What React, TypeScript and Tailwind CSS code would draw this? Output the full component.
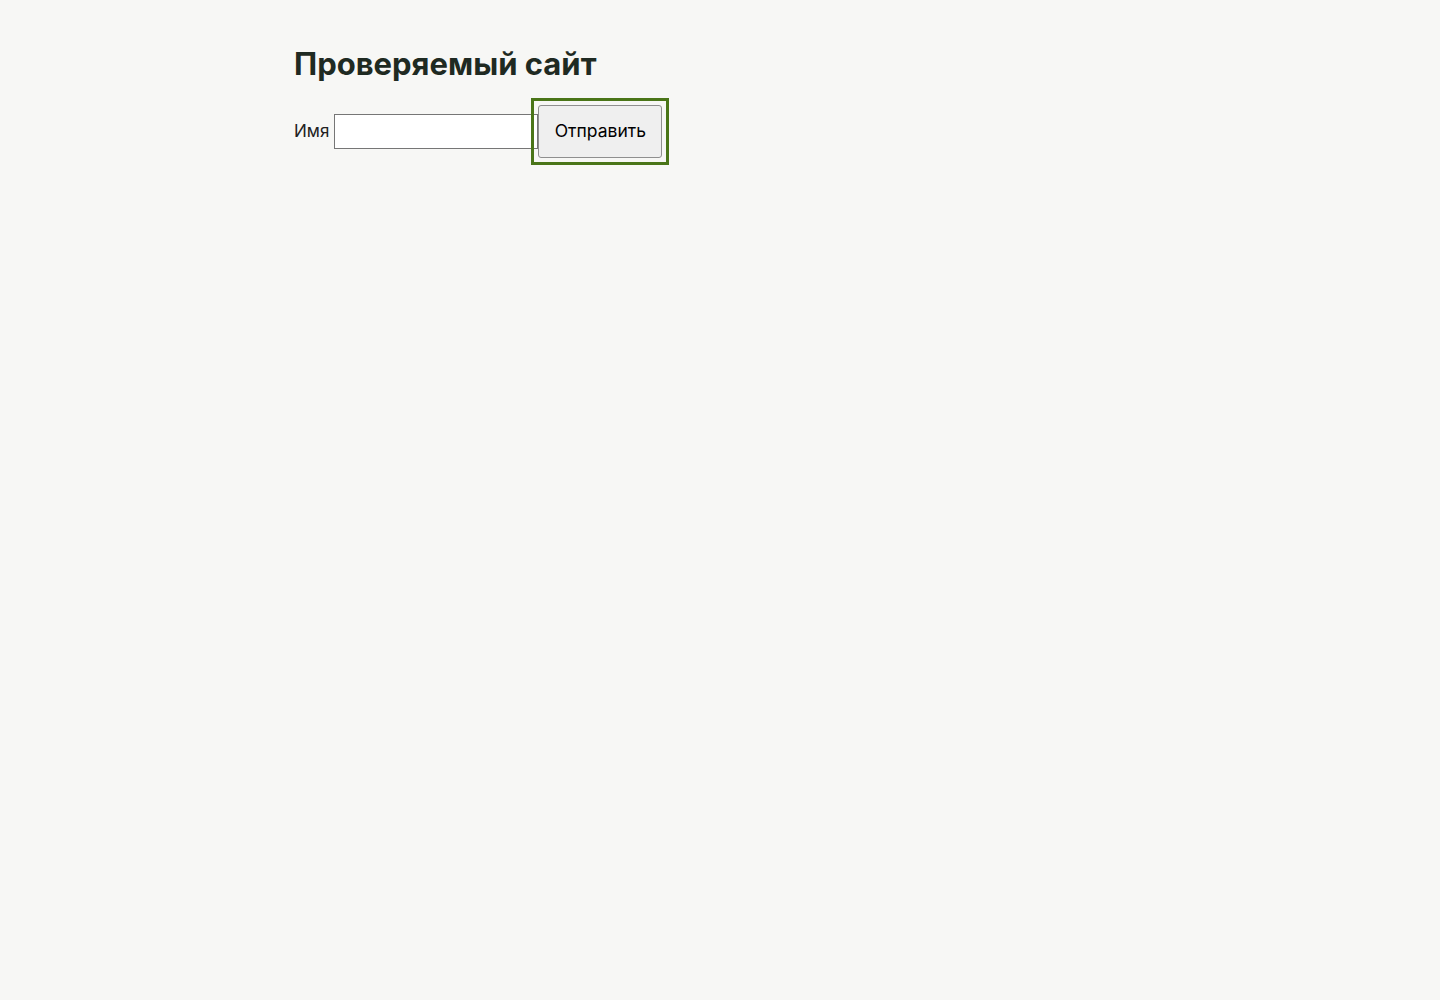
import React from 'react';

export default function App() {
  return (
    <div className="min-h-screen bg-[#f7f7f5] font-['Inter','Noto_Sans',sans-serif]">
      <div className="mx-auto w-[852px] pt-[45px]">
        <h1 className="text-[31px] font-bold leading-[38px] text-[#1f2a22]">Проверяемый сайт</h1>

        <form className="mt-[22px] flex items-center" onSubmit={(e) => e.preventDefault()}>
          <label htmlFor="name" className="mr-[5px] text-[17px] text-[#222]">Имя</label>
          <input
            id="name"
            type="text"
            className="h-[35px] w-[204px] border border-[#767676] bg-white px-1 text-[17px] outline-none"
          />
          {/* focus frame around the submit button */}
          <div className="-my-[7px] -ml-[7px] border-[3px] border-[#4a7518] p-[4px]">
            <button
              type="submit"
              className="block h-[53px] w-[124px] rounded-[3px] border border-[#8f8f8f] bg-[#efefef] text-[17.5px] text-black"
            >
              Отправить
            </button>
          </div>
        </form>
      </div>
    </div>
  );
}
